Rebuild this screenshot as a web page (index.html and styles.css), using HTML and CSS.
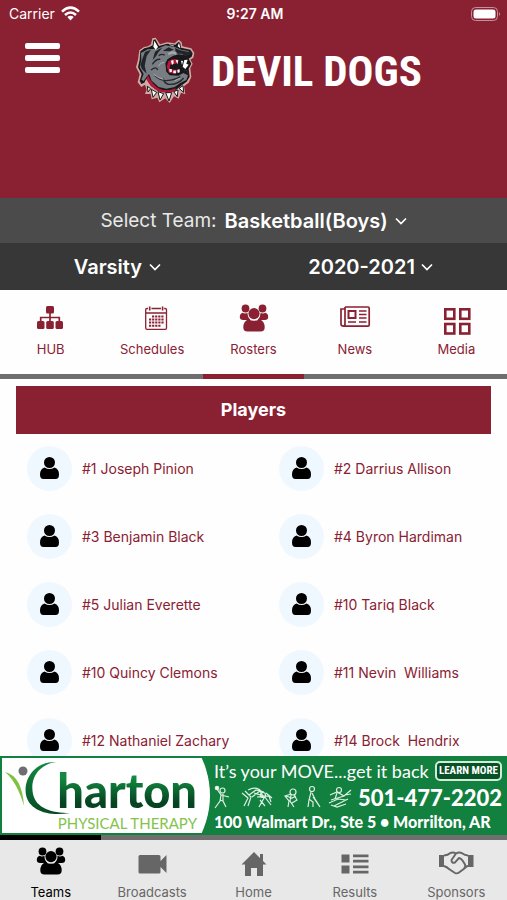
FILE: index.html
```html
<!DOCTYPE html>
<html lang="en">
<head>
<meta charset="utf-8">
<meta name="viewport" content="width=device-width, initial-scale=1">
<title>Devil Dogs</title>
<link rel="stylesheet" href="styles.css">
</head>
<body>
<svg class="defs" aria-hidden="true">
  <symbol id="group" viewBox="0 0 30 32">
    <circle cx="6.500" cy="5.500" r="3.900"/><circle cx="23.500" cy="5.500" r="3.900"/>
    <path d="M3.500 9.800Q6 11 8.500 9.800Q8.200 14 11.500 17H4.200Q.8 17 .8 14Q.8 10.800 3.500 9.800zM26.500 9.800Q24 11 21.500 9.800Q21.800 14 18.500 17h7.300Q29.200 17 29.200 14Q29.200 10.800 26.500 9.800z"/>
    <circle cx="15" cy="10.600" r="5.600"/>
    <path d="M9.500 16.200Q15 19.200 20.500 16.200Q25.700 18 25.700 24.500Q25.700 28.500 21.500 28.500h-13Q4.300 28.500 4.300 24.500Q4.300 18 9.500 16.200z"/>
  </symbol>
  <symbol id="person" viewBox="0 0 19 22">
    <circle cx="9.500" cy="5.500" r="5.500"/>
    <path d="M4.500 10.500Q9.500 13.700 14.500 10.500Q19 11.800 19 17.500Q19 22 15.500 22h-12Q0 22 0 17.500Q0 11.800 4.500 10.500z"/>
  </symbol>
  <symbol id="chevron" viewBox="0 0 12 8"><path d="M1 1.500l5 5 5-5" fill="none" stroke="currentColor" stroke-width="1.700"/></symbol>
</svg>

<header class="header">
  <div class="status">
    <span class="carrier">Carrier
      <svg class="line" width="19" height="15" viewBox="0 0 19 15" stroke-width="2.600"><path d="M1 5.600Q9.500-2.200 18 5.600M4 9Q9.500 4 15 9"/><path d="M9.500 14.500L6.300 11Q9.500 8.400 12.700 11z" fill="#fff" stroke="none"/></svg>
    </span>
    <time>9:27 AM</time>
    <svg class="battery" width="30" height="14" viewBox="0 0 30 14"><rect x=".5" y=".5" width="26" height="13" rx="4" fill="none" stroke="#c4909a"/><rect x="2.500" y="2.500" width="22" height="9" rx="2.500" fill="#fff"/><path d="M28 5q2 2 0 4z" fill="#c4909a"/></svg>
  </div>
  <div class="masthead">
    <button class="menu" type="button" aria-label="Menu"><span></span><span></span><span></span></button>
    <div class="brand">
      <svg width="61" height="67" viewBox="15 20 183 201" aria-hidden="true">
        <path d="M28 60L42 50L54 48L63 42L67 24L77 22L90 42L111 36L134 39L146 28L155 36L157 48L184 54L193 68L190 82L181 88L188 100L181 114L184 140L176 157L162 168L166 192L153 187L146 205L132 198L119 218L106 204L88 216L82 202L65 207L62 191L45 191L50 178L45 163L34 170L23 156L29 132L18 111L24 88z" fill="#d3a9a3"/>
        <path d="M31 63L43 54L56 51L68 45L70 29L76 27L87 47L111 40L136 43L146 34L151 39L153 52L181 58L188 69L185 79L176 85L184 100L176 115L179 139L170 154L156 164L138 179L113 186L83 181L63 167L49 145L43 157L34 161L29 151L35 132L24 111L29 88z" fill="#17181b"/>
        <path d="M33 68L53 57L82 55L107 45L134 50L154 58L177 62L179 71L165 75L146 72L130 76L113 86L106 99L109 124L119 135L145 136L160 128L174 135L169 149L151 158L134 170L109 175L86 170L65 151L57 131L50 139L41 152L34 148L41 131L29 110L34 88z" fill="#777d82"/>
        <path d="M70 49L73 31L84 50L77 58zM143 48L147 37L151 54z" fill="#fff"/>
        <path d="M45 65L63 58L50 77L44 107L50 130L36 116L31 104L38 83zM75 64L88 56L97 52L85 66L78 78L68 89zM98 62L116 51L131 58L119 63zM135 53L151 60L173 64L183 62L185 72L167 78L155 70L138 70z" fill="#222428"/>
        <path d="M114 68Q130 57 142 68L137 73Q125 66 116 75z" fill="#a5a9ac"/>
        <path d="M54 135Q67 165 90 176Q113 185 136 174L138 181Q112 192 85 183Q63 171 49 146z" fill="#b3173a"/>
        <path d="M112 89Q132 73 156 82L177 90L176 104L160 105L159 119L145 134L119 133L108 119z" fill="#17181b"/>
        <path d="M115 93Q130 82 145 88L143 99L120 103L120 117L145 119L137 130L117 127L110 109z" fill="#b3173a"/>
        <path d="M123 91l7-2 1 10-5 5zM137 89l8 1-3 12zM153 91l6 1-3 12zM163 89l10-1-4 12 7 3-10 13-8-7zM118 116l8 1-1 8-6 1zM130 121l7-1 1 9h-8zM142 118l7-1v9l-6 2z" fill="#fff"/>
        <path d="M67 102Q78 85 91 87M63 119Q80 106 83 119M74 135Q88 150 109 151Q137 149 151 139M100 144Q101 158 116 162Q144 164 161 143M162 119Q174 120 173 129M86 76Q97 69 104 75" fill="none" stroke="#25282c" stroke-width="4"/>
        <path d="M72 132Q84 144 101 147M86 107Q92 95 103 96M134 151l17-8M118 43l14 4" fill="none" stroke="#a9b0b4" stroke-width="3"/>
        <path d="M52 168l2 17 8-10zM64 177l5 24 11-15zM84 184l6 25 11-19zM107 187l10 25 8-25zM131 184l11 15 2-20zM147 174l14 12-2-20z" fill="#fff" stroke="#17181b" stroke-width="3"/>
      </svg>
      <h1>DEVIL DOGS</h1>
    </div>
  </div>
</header>

<div class="filter filter-team">
  <label for="team">Select Team:</label>
  <span class="pick"><select id="team"><option>Basketball(Boys)</option></select><svg width="12" height="8"><use href="#chevron"/></svg></span>
</div>
<div class="filter filter-season">
  <span class="pick"><select aria-label="Level"><option>Varsity</option></select><svg width="12" height="8"><use href="#chevron"/></svg></span>
  <span class="pick"><select aria-label="Season"><option>2020-2021</option></select><svg width="12" height="8"><use href="#chevron"/></svg></span>
</div>

<nav class="tabs" aria-label="Team">
  <a href="#hub"><svg viewBox="0 0 30 32"><path d="M14 10v9M4.700 19v-4.500h18.600V19" fill="none" stroke="currentColor" stroke-width="1.700"/><rect x="10" y="3" width="8" height="7.500" rx="1.500"/><rect x="1" y="18" width="7.500" height="8" rx="1.500"/><rect x="10.200" y="18" width="7.600" height="8" rx="1.500"/><rect x="19.500" y="18" width="7.500" height="8" rx="1.500"/></svg>HUB</a>
  <a href="#schedules"><svg class="line" viewBox="0 0 30 32"><path d="M11 5.500H10q-1.300 0-1.300 1.300V25q0 1.300 1.300 1.300h18.200q1.300 0 1.300-1.300V6.800q0-1.300-1.300-1.300h-1M14.500 5.500h9.500M8.700 10h20.800" stroke-width="1.300"/><path d="M12.700 3.500v4M25.600 3.500v4" stroke-width="1.600"/><path d="M15 13.500h12M12 16.500h15M12 19.500h15M12 22.700h12" stroke-width="2" stroke-dasharray="2.200 .9"/></svg>Schedules</a>
  <a href="#rosters" class="active" aria-current="page"><svg><use href="#group"/></svg>Rosters</a>
  <a href="#news"><svg class="line" viewBox="0 0 30 32"><path d="M5 4h23q1.200 0 1.200 1.200V22q0 1.200-1.200 1.200H3.500Q1 23.200 1 21V6h4M5 4v17q0 2-1.700 2" stroke-width="1.700"/><rect x="8.500" y="8" width="7" height="7" stroke-width="2"/><path d="M19 8h7.500M19 11.500h7.500M19 15h7.500M8 19h8M19 19h7.500" stroke-width="1.700"/></svg>News</a>
  <a href="#media"><svg class="line" viewBox="0 0 30 32" stroke-width="2.600"><rect x="4.300" y="6.300" width="9" height="9.500"/><rect x="19.300" y="6.300" width="9" height="9.500"/><rect x="4.300" y="21" width="9" height="9.500"/><rect x="19.300" y="21" width="9" height="9.500"/></svg>Media</a>
</nav>

<main class="roster">
  <h2>Players</h2>
  <ul>
    <li><span class="avatar"><svg><use href="#person"/></svg></span><a href="#p1">#1 Joseph Pinion</a></li>
    <li><span class="avatar"><svg><use href="#person"/></svg></span><a href="#p2">#2 Darrius Allison</a></li>
    <li><span class="avatar"><svg><use href="#person"/></svg></span><a href="#p3">#3 Benjamin Black</a></li>
    <li><span class="avatar"><svg><use href="#person"/></svg></span><a href="#p4">#4 Byron Hardiman</a></li>
    <li><span class="avatar"><svg><use href="#person"/></svg></span><a href="#p5">#5 Julian Everette</a></li>
    <li><span class="avatar"><svg><use href="#person"/></svg></span><a href="#p6">#10 Tariq Black</a></li>
    <li><span class="avatar"><svg><use href="#person"/></svg></span><a href="#p7">#10 Quincy Clemons</a></li>
    <li><span class="avatar"><svg><use href="#person"/></svg></span><a href="#p8">#11 Nevin  Williams</a></li>
    <li><span class="avatar"><svg><use href="#person"/></svg></span><a href="#p9">#12 Nathaniel Zachary</a></li>
    <li><span class="avatar"><svg><use href="#person"/></svg></span><a href="#p10">#14 Brock  Hendrix</a></li>
  </ul>
</main>

<aside class="ad">
  <div class="sponsor">
    <svg class="swoosh" width="70" height="54" viewBox="0 0 70 54" aria-hidden="true">
      <defs><linearGradient id="leaf" x2="0" y2="1"><stop stop-color="#128a41"/><stop offset="1" stop-color="#074a25"/></linearGradient></defs>
      <path d="M3 14Q20 18 22 48Q15 24 3 14z" fill="#7fc243"/>
      <circle cx="21" cy="13" r="4.500" fill="#6d6e71"/>
      <path d="M54 4C35 7 28 22 31 36C34 50 49 55 68 55C46 59 27 52 24 37C21 20 34 3 54 4z" fill="url(#leaf)"/>
    </svg>
    <p class="sponsor-name">harton</p>
    <p class="sponsor-line">PHYSICAL THERAPY</p>
  </div>
  <div class="pitch">
    <div class="pitch-row"><span class="slogan">It’s your MOVE...get it back</span><button type="button">LEARN MORE</button></div>
    <div class="pitch-row">
      <svg class="figures" width="138" height="24" viewBox="0 0 138 24" stroke-width="1.200" aria-hidden="true">
        <circle cx="3" cy="3" r="1.700" fill="#fff"/><circle cx="8.500" cy="5.500" r="2.500"/><path d="M3 4l4 6-1 6-5 7M7 10l8 2M9 9v7l3 6M6 15l3 1"/>
        <circle cx="49" cy="10" r="2.500"/><path d="M28 8l6 5-4 8M31 6l6 6-3 9M35 10l7-5 8 2M38 12l8-6 4 7-5 9M40 8l10 3 7 9M43 12l12-1 2 6M34 5q9-5 15 3M46 15l5 6M52 8l6 5"/>
        <circle cx="79" cy="7" r="3"/><path d="M77 9l-6 2 4 5-1 6M77 10l-1 6 4 6M80 10l3 5-5 3M72 11l6 2 4-2"/>
        <circle cx="98" cy="4" r="2.500"/><path d="M97 7l-2 8-1 7M98 8l3 6 5 8M95 14l4 3v5M106 22l-7-10"/>
        <circle cx="125" cy="5" r="2.500"/><path d="M116 10l7-3 7 4 7-6M117 15l13-4M115 18l9-4 8 1M120 21l14-7M123 8l-2 6M131 10l6-1M117 20l6 2 9-3"/>
      </svg>
      <span class="phone">501-477-2202</span>
    </div>
    <div class="address">100 Walmart Dr., Ste 5 • Morrilton, AR</div>
  </div>
</aside>

<nav class="bottom" aria-label="Main">
  <a href="#teams" class="active" aria-current="page"><svg><use href="#group"/></svg>Teams</a>
  <a href="#broadcasts"><svg viewBox="0 0 30 32"><path d="M3 9h19q1.500 0 1.500 1.500V15l6-6v18l-6-6v5q0 1.500-1.500 1.500H3q-1.500 0-1.500-1.500V10.500Q1.500 9 3 9z"/></svg>Broadcasts</a>
  <a href="#home"><svg viewBox="0 0 30 32"><path d="M15 6L2.500 18.500H6V30h6v-8h6v8h6V18.500h3.500L24 15V8h-3v4z"/></svg>Home</a>
  <a href="#results"><svg viewBox="0 0 30 32"><path d="M1.500 8.500h8v8h-8zM1.500 19.500h8v8h-8zM13 8.500h15.500v2.700H13zM13 13.700h15.500v2.700H13zM13 19.500h15.500v2.700H13zM13 24.800h15.500v2.700H13z"/></svg>Results</a>
  <a href="#sponsors"><svg viewBox="0 0 30 32"><path d="M-2 9h5v12h-5zM27 9h5.500v12H27z"/><path d="M3 9.500Q7 9 9 7.200Q12 5.500 15 7.500Q18 5.500 21 7.200Q24 9.500 27 9.500M3 20q3 1 5 3l6 4q2 1 4-.5l6-4.500q1.500-2 3-2M15 7.500l-4.500 6.500q0 3.500 3.500 2.500l4-4.500q2.500 0 6 6.500M24 18.500q1 2-1 3.500" fill="none" stroke="currentColor" stroke-width="1.900"/></svg>Sponsors</a>
</nav>
</body>
</html>
```
FILE: styles.css
```css
* { box-sizing: border-box; }

:root {
  --wine: #8a2132;
  --grey: #6f6f6f;
  --green: #12803f;
  --condensed: "Roboto Condensed", "Open Sans Condensed", "DejaVu Sans Condensed", sans-serif;
}

body {
  margin: 0;
  height: 100vh;
  display: flex;
  flex-direction: column;
  background: #fefefe;
  font-family: Inter, "Liberation Sans", sans-serif;
  overflow: hidden;
}

h1, h2, p, ul { margin: 0; padding: 0; }
a { color: inherit; text-decoration: none; }
button, select { font: inherit; color: inherit; border: 0; padding: 0; background: none; }
svg { display: block; flex: none; fill: currentColor; overflow: visible; }
.line { fill: none; stroke: currentColor; }
.defs { position: absolute; width: 0; height: 0; }

.header {
  background: var(--wine);
  color: #fff;
  height: 198px;
  flex: none;
}

.status {
  display: grid;
  grid-template-columns: 1fr auto 1fr;
  align-items: center;
  height: 27px;
  padding: 0 6px 0 9px;
  font-size: 14px;
}
.carrier { display: flex; align-items: center; gap: 6px; }
.status time { font-weight: 600; }
.battery { justify-self: end; }

.masthead {
  display: grid;
  grid-template-columns: 110px 1fr;
  padding: 10px 0 0 25px;
}
.menu {
  display: flex;
  flex-direction: column;
  gap: 6px;
  width: 35px;
  height: 30px;
  margin-top: 6px;
}
.menu span { width: 100%; height: 6px; border-radius: 2px; background: #fff; }
.brand { display: flex; align-items: center; gap: 15px; }
.brand h1 {
  font: bold 43px/60px var(--condensed);
  white-space: nowrap;
}

.filter {
  display: flex;
  align-items: center;
  flex: none;
  color: #fff;
  font-size: 20px;
}
.filter-team { justify-content: center; gap: 8px; height: 45px; background: #4b4b4b; }
.filter-team label { color: #e8e8e8; font-size: 19px; }
.filter-season { justify-content: space-around; height: 47px; background: #373737; }
.pick { display: flex; align-items: center; gap: 6px; }
.pick select { appearance: none; font-weight: 600; }

.tabs, .bottom { display: flex; flex: none; }
.tabs a, .bottom a {
  flex: 1 1 0;
  display: flex;
  flex-direction: column;
  align-items: center;
  font-size: 13px;
  line-height: 16px;
}
.tabs svg, .bottom svg { width: 30px; height: 32px; }
.tabs a {
  color: var(--wine);
  height: 89px;
  padding-top: 13px;
  gap: 6px;
  border-bottom: 5px solid var(--grey);
}
.tabs .active { border-color: var(--wine); }

.roster { flex: 1 1 0; min-height: 0; overflow: hidden; padding-top: 7px; }
.roster h2 {
  margin: 0 16px;
  background: var(--wine);
  color: #fff;
  font-size: 18px;
  font-weight: 700;
  line-height: 48px;
  text-align: center;
}
.roster ul { list-style: none; display: grid; grid-template-columns: 1fr 1fr; padding-right: 3px; }
.roster li {
  display: flex;
  align-items: center;
  gap: 10px;
  height: 68px;
  padding-left: 27px;
  color: var(--wine);
  font-size: 14px;
  white-space: pre;
}
.avatar {
  display: grid;
  place-items: center;
  width: 45px;
  height: 45px;
  border-radius: 50%;
  background: #f0f8ff;
  color: #000;
}
.avatar svg { width: 19px; height: 22px; }

.ad {
  display: flex;
  flex: none;
  height: 79px;
  padding: 2px;
  background: var(--green);
  color: #fff;
  font-family: Lato, sans-serif;
  white-space: nowrap;
}
.sponsor {
  display: grid;
  grid-template-rows: 56px 19px;
  flex: none;
  width: 208px;
  padding-right: 13px;
  background: #fff;
  clip-path: ellipse(208px 135px at 0 50%);
}
.swoosh { grid-area: 1 / 1; }
.sponsor-name {
  grid-area: 1 / 1;
  justify-self: end;
  font-size: 47px;
  font-weight: 900;
  line-height: 64px;
  color: transparent;
  background: linear-gradient(#128a41 35%, #064321 80%);
  background-clip: text;
}
.sponsor-line { justify-self: end; font-size: 15px; line-height: 19px; color: #83c34b; }

.pitch { flex: 1; min-width: 0; padding: 1px 3px 0 4px; }
.pitch-row { display: flex; align-items: center; justify-content: space-between; height: 24px; }
.pitch-row + .pitch-row { height: 28px; }
.figures { fill: none; stroke: #dcefe2; }
.slogan { font-size: 18px; }
.pitch button {
  height: 20px;
  padding: 0 2px;
  border: 2px solid #d3ecd9;
  border-radius: 5px;
  background: #075127;
  font: bold 11px/16px var(--condensed);
}
.phone { font-size: 22px; font-weight: 900; }
.address { font-size: 16px; font-weight: 900; line-height: 22px; }

.bottom { background: #e8e8e8; color: #666; }
.bottom a {
  height: 65px;
  padding-top: 6px;
  gap: 6px;
  border-top: 5px solid var(--grey);
}
.bottom .active { color: #000; border-color: #000; }
```
